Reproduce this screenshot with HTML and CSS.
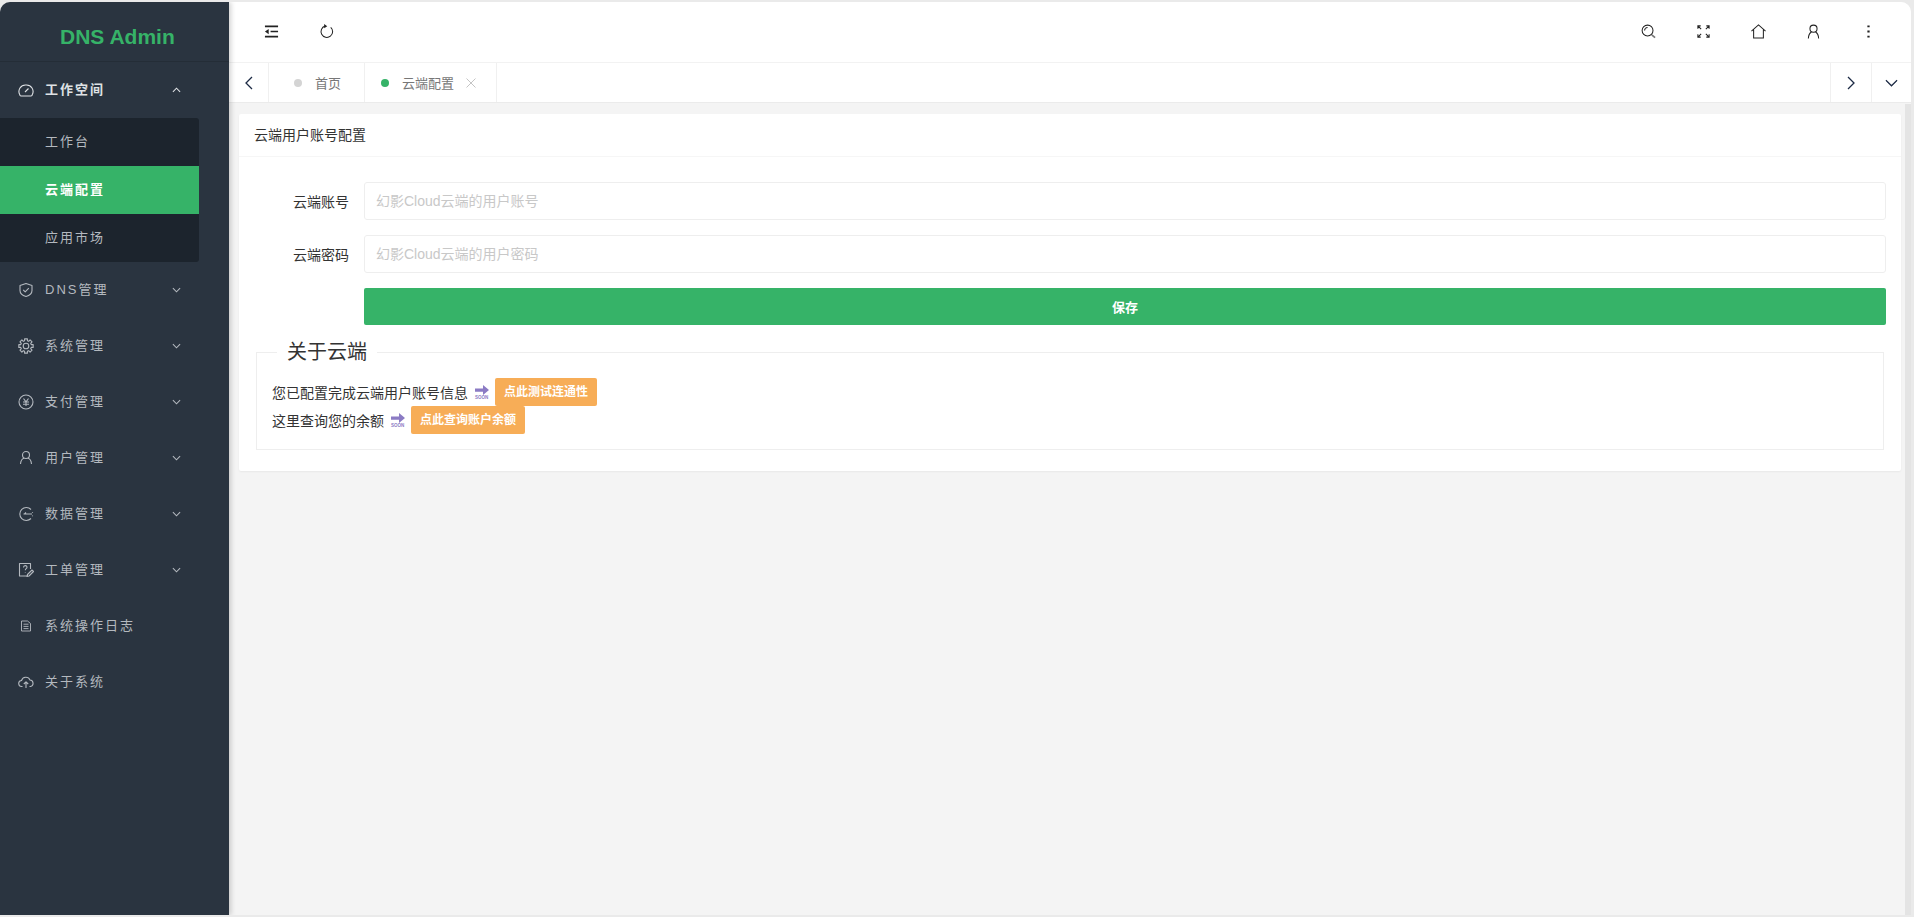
FILE: index.html
```html
<!DOCTYPE html>
<html lang="zh-CN">
<head>
    <meta charset="UTF-8">
    <meta name="viewport" content="width=device-width, initial-scale=1.0">
    <title>DNS Admin</title>
    <link rel="stylesheet" href="styles.css">
</head>
<body>
<div class="app">
    <aside class="sidebar">
        <div class="logo">DNS Admin</div>
        <nav class="menu">
            <div class="menu-item open">
                <svg class="menu-icon" viewBox="0 0 16 16"><path d="M3 14h10a1.200 1.200 0 0 0 1.200-1.200A6.600 6.600 0 0 0 8 3a6.600 6.600 0 0 0-6.200 9.800A1.200 1.200 0 0 0 3 14zM7 10l3.500-3.500"/></svg>
                <span class="menu-text">工作空间</span>
                <svg class="menu-arrow" viewBox="0 0 10 6"><path d="M1 5l4-4 4 4"/></svg>
            </div>
            <div class="submenu">
                <div class="sub-item">工作台</div>
                <div class="sub-item active">云端配置</div>
                <div class="sub-item">应用市场</div>
            </div>
            <div class="menu-item">
                <svg class="menu-icon" viewBox="0 0 16 16"><path d="M8 1.500l6 2v5c0 3-2.500 5-6 6-3.500-1-6-3-6-6v-5zM5.200 7.800l2 2 3.600-3.600"/></svg>
                <span class="menu-text">DNS管理</span>
                <svg class="menu-arrow" viewBox="0 0 10 6"><path d="M1 1l4 4 4-4"/></svg>
            </div>
            <div class="menu-item">
                <svg class="menu-icon" viewBox="0 0 16 16"><path d="M6.600 2.780L6.610 .83H9.390L9.400 2.780L10.700 3.320L12.090 1.950L14.050 3.910L12.680 5.300L13.220 6.600L15.170 6.610V9.390L13.220 9.400L12.680 10.700L14.050 12.090L12.090 14.050L10.700 12.680L9.400 13.220L9.390 15.170H6.610L6.600 13.220L5.300 12.680L3.910 14.050L1.950 12.090L3.320 10.700L2.780 9.400L.83 9.390V6.610L2.780 6.600L3.320 5.300L1.950 3.910L3.910 1.950L5.300 3.320z"/><circle cx="8" cy="8" r="2.800"/></svg>
                <span class="menu-text">系统管理</span>
                <svg class="menu-arrow" viewBox="0 0 10 6"><path d="M1 1l4 4 4-4"/></svg>
            </div>
            <div class="menu-item">
                <svg class="menu-icon" viewBox="0 0 16 16"><circle cx="8" cy="8" r="7"/><path d="M5.500 4.500L8 7.800l2.500-3.300M5 8h6M5 10.300h6M8 8v4"/></svg>
                <span class="menu-text">支付管理</span>
                <svg class="menu-arrow" viewBox="0 0 10 6"><path d="M1 1l4 4 4-4"/></svg>
            </div>
            <div class="menu-item">
                <svg class="menu-icon" viewBox="0 0 16 16"><circle cx="8" cy="5" r="3.500"/><path d="M2.500 14c.3-3.300 2-5.500 3.500-5.800M13.500 14c-.3-3.300-2-5.500-3.500-5.800"/></svg>
                <span class="menu-text">用户管理</span>
                <svg class="menu-arrow" viewBox="0 0 10 6"><path d="M1 1l4 4 4-4"/></svg>
            </div>
            <div class="menu-item">
                <svg class="menu-icon" viewBox="0 0 16 16"><path d="M13 3.500A6.500 6.500 0 1 0 13 12.500M5.500 8H14M6.500 8l1.500-1.500M14.500 6v.8M14.500 9.500v.8"/></svg>
                <span class="menu-text">数据管理</span>
                <svg class="menu-arrow" viewBox="0 0 10 6"><path d="M1 1l4 4 4-4"/></svg>
            </div>
            <div class="menu-item">
                <svg class="menu-icon" viewBox="0 0 16 16"><path d="M9 14H1.500V1.500h11V7M5.500 5.500C5.500 3 9 3 9 5.200c0 1.500-1.700 1.500-1.700 3M7.300 10v.6M9 14.500l.5-2 4.500-4.500 1.500 1.500-4.500 4.500z"/></svg>
                <span class="menu-text">工单管理</span>
                <svg class="menu-arrow" viewBox="0 0 10 6"><path d="M1 1l4 4 4-4"/></svg>
            </div>
            <div class="menu-item">
                <svg class="menu-icon icon-thin" viewBox="0 0 16 16"><path d="M3.500 3h6l3 2.500V13h-9zM5.500 6.200h5M5.500 8.400h5M5.500 10.600h5"/></svg>
                <span class="menu-text">系统操作日志</span>
            </div>
            <div class="menu-item">
                <svg class="menu-icon" viewBox="0 0 16 16"><path d="M4.500 12.500H4a3 3 0 0 1-.5-6A4.500 4.500 0 0 1 12 6a3.300 3.300 0 0 1 .5 6.500h-1M8 14V8M5.800 10L8 7.800 10.200 10"/></svg>
                <span class="menu-text">关于系统</span>
            </div>
        </nav>
    </aside>

    <div class="main">
        <header class="topbar">
            <div class="topbar-group">
                <svg class="top-icon" viewBox="0 0 16 16"><path class="thick" d="M1 2.500h14M7 8h8M1 13.500h14"/><path class="solid" d="M1 8l4-2.800v5.600z"/></svg>
                <svg class="top-icon" viewBox="0 0 16 16"><path d="M6.500 2.200A6.200 6.200 0 1 0 12.500 3.500"/><path class="solid" d="M5.500 0l3.300 2.300-3.300 2.300z"/></svg>
            </div>
            <div class="topbar-group">
                <svg class="top-icon" viewBox="0 0 16 16"><circle cx="7" cy="7" r="5.800"/><path d="M3.800 7A3.200 3.200 0 0 1 7 3.800"/><path class="thick grey" d="M11.500 11.500l3.500 3"/></svg>
                <svg class="top-icon" viewBox="0 0 16 16"><path d="M2 5V2h3M2 2l3.500 3.500M11 2h3v3M14 2l-3.500 3.500M2 11v3h3M2 14l3.500-3.500M11 14h3v-3M14 14l-3.500-3.500"/></svg>
                <svg class="top-icon" viewBox="0 0 16 16"><path d="M.5 7.500L8 1l7.500 6.500M2.800 6v9h10.400V6"/></svg>
                <svg class="top-icon" viewBox="0 0 16 16"><circle cx="8" cy="5" r="3.800"/><path d="M2.500 15.500c.2-3.500 1.500-6 3.300-7M13.500 15.500c-.2-3.500-1.500-6-3.300-7"/></svg>
                <svg class="top-icon" viewBox="0 0 16 16"><path class="thick dots" d="M8 1.500v2M8 7v2M8 12.500v2"/></svg>
            </div>
        </header>

        <div class="tabs">
            <div class="tab-btn">
                <svg class="tab-arrow" viewBox="0 0 8 14"><path d="M7 1L1 7l6 6"/></svg>
            </div>
            <div class="tab">
                <span class="dot"></span>
                <span>首页</span>
            </div>
            <div class="tab tab-current">
                <span class="dot dot-green"></span>
                <span>云端配置</span>
                <svg class="tab-close" viewBox="0 0 10 10"><path d="M.5.500l9 9M9.500.500l-9 9"/></svg>
            </div>
            <div class="tabs-space"></div>
            <div class="tab-btn tab-btn-right tab-btn-wide">
                <svg class="tab-arrow" viewBox="0 0 8 14"><path d="M1 1l6 6-6 6"/></svg>
            </div>
            <div class="tab-btn tab-btn-right">
                <svg class="tab-arrow tab-arrow-down" viewBox="0 0 14 8"><path d="M1 1l6 6 6-6"/></svg>
            </div>
        </div>

        <div class="body-wrap">
            <div class="content">
                <section class="card">
                    <div class="card-header">云端用户账号配置</div>
                    <div class="card-body">
                        <form class="form">
                            <div class="form-row">
                                <label class="form-label" for="account">云端账号</label>
                                <input class="form-input" id="account" type="text" placeholder="幻影Cloud云端的用户账号">
                            </div>
                            <div class="form-row">
                                <label class="form-label" for="password">云端密码</label>
                                <input class="form-input" id="password" type="text" placeholder="幻影Cloud云端的用户密码">
                            </div>
                            <div class="form-row">
                                <span class="form-label"></span>
                                <button class="save-btn" type="button">保存</button>
                            </div>
                        </form>
                        <fieldset class="about">
                            <legend>关于云端</legend>
                            <div class="about-line">
                                <span>您已配置完成云端用户账号信息</span>
                                <svg class="soon" viewBox="0 0 14 14"><path d="M0 3.500h8V0l6 5-6 5V6.700H0z"/><text x="0" y="14">SOON</text></svg>
                                <a class="orange-btn">点此测试连通性</a>
                            </div>
                            <div class="about-line">
                                <span>这里查询您的余额</span>
                                <svg class="soon" viewBox="0 0 14 14"><path d="M0 3.500h8V0l6 5-6 5V6.700H0z"/><text x="0" y="14">SOON</text></svg>
                                <a class="orange-btn">点此查询账户余额</a>
                            </div>
                        </fieldset>
                    </div>
                </section>
            </div>
            <div class="scrollbar"></div>
        </div>
    </div>
</div>
</body>
</html>
```

FILE: styles.css
```css
* {
    box-sizing: border-box;
}

body {
    margin: 0;
    height: 917px;
    padding-top: 2px;
    overflow: hidden;
    background-color: #eaeaea;
    font-family: "Liberation Sans", "Noto Sans CJK SC", sans-serif;
    font-size: 14px;
    color: #333;
}

.app {
    display: flex;
    width: 1911px;
    height: 913px;
    border-radius: 10px 10px 0 0;
    overflow: hidden;
    background-color: #f4f4f4;
}

/* Sidebar */
.sidebar {
    flex: 0 0 229px;
    background-color: #2a3440;
    box-shadow: 2px 0 5px rgba(0, 0, 0, 0.18);
    position: relative;
    z-index: 2;
}

.logo {
    height: 60px;
    padding-left: 60px;
    border-bottom: 1px solid #242d37;
    color: #36b368;
    font-size: 21px;
    font-weight: bold;
    line-height: 70px;
}

.menu-item {
    display: flex;
    align-items: center;
    height: 56px;
    padding-left: 18px;
    color: #b4b9bf;
    font-size: 13px;
    letter-spacing: 2px;
}

.menu-item.open {
    color: #dfe2e5;
    font-weight: bold;
}

.menu-icon {
    width: 16px;
    height: 16px;
    margin-right: 11px;
    fill: none;
    stroke: currentColor;
    stroke-width: 1.100;
    stroke-linejoin: round;
}

.icon-thin {
    stroke-width: 0.900;
}

.menu-text {
    flex: 1;
    padding-bottom: 3px;
}

.menu-arrow {
    width: 9px;
    height: 6px;
    margin-right: 48px;
    fill: none;
    stroke: currentColor;
    stroke-width: 1.200;
}

.submenu {
    width: 199px;
    background-color: #1c242d;
    border-radius: 0 3px 3px 0;
}

.sub-item {
    height: 48px;
    line-height: 48px;
    padding-left: 45px;
    color: #b4b9bf;
    font-size: 13px;
    letter-spacing: 2px;
}

.sub-item.active {
    background-color: #36b368;
    color: #fff;
    font-weight: bold;
}

/* Header and tabs */
.main {
    flex: 1;
    display: flex;
    flex-direction: column;
    min-width: 0;
}

.topbar {
    display: flex;
    justify-content: space-between;
    align-items: center;
    height: 61px;
    flex: none;
    padding: 0 35px 2px 35px;
    background-color: #fff;
    border-bottom: 1px solid #f2f2f2;
}

.topbar-group {
    display: flex;
    align-items: center;
    gap: 40px;
}

.top-icon {
    width: 15px;
    height: 15px;
    fill: none;
    stroke: #222;
    stroke-width: 1.100;
}

.top-icon .thick {
    stroke-width: 1.800;
}

.top-icon .dots {
    stroke-width: 2.400;
}

.top-icon .grey {
    stroke: #777;
}

.top-icon .solid {
    fill: #222;
    stroke: none;
}

.tabs {
    display: flex;
    flex: none;
    height: 40px;
    background-color: #fff;
    border-bottom: 1px solid #ebebeb;
    font-size: 13px;
    color: #777;
}

.tab-btn {
    display: flex;
    justify-content: center;
    align-items: center;
    width: 40px;
    border-right: 1px solid #f0f0f0;
}

.tab-btn-right {
    border-right: none;
    border-left: 1px solid #f0f0f0;
}

.tab-btn-wide {
    width: 41px;
}

.tab-arrow {
    width: 8px;
    height: 14px;
    fill: none;
    stroke: #1c2a44;
    stroke-width: 1.300;
}

.tab-arrow-down {
    width: 13px;
    height: 8px;
}

.tab {
    display: flex;
    align-items: center;
    width: 96px;
    padding-left: 25px;
    border-right: 1px solid #f0f0f0;
}

.tab-current {
    width: 132px;
    padding-left: 16px;
}

.dot {
    width: 8px;
    height: 8px;
    margin-right: 13px;
    border-radius: 50%;
    background-color: #d4d4d4;
}

.dot-green {
    background-color: #36b368;
}

.tab-close {
    width: 10px;
    height: 10px;
    margin-left: 12px;
    fill: none;
    stroke: #c4c4c4;
    stroke-width: 1;
}

.tabs-space {
    flex: 1;
}

/* Page content */
.body-wrap {
    flex: 1;
    display: flex;
    min-height: 0;
}

.content {
    flex: 1;
    padding: 11px 4px 0 10px;
}

.scrollbar {
    flex: 0 0 6px;
    margin-top: 1px;
    background-color: #e4e4e4;
}

.card {
    height: 357px;
    background-color: #fff;
    border-radius: 2px;
    box-shadow: 0 1px 2px rgba(0, 0, 0, 0.05);
}

.card-header {
    height: 43px;
    line-height: 42px;
    padding-left: 15px;
    border-bottom: 1px solid #f6f6f6;
}

.card-body {
    padding: 25px 15px 0 17px;
}

.form-row {
    display: flex;
    align-items: center;
    margin-bottom: 15px;
}

.form-label {
    flex: 0 0 108px;
    padding-right: 15px;
    text-align: right;
    color: #333;
}

.form-input {
    flex: 1;
    height: 38px;
    padding: 0 11px;
    border: 1px solid #eee;
    border-radius: 3px;
    outline: none;
    font: inherit;
}

.form-input::placeholder {
    color: #c8c8c8;
}

.save-btn {
    flex: 1;
    height: 37px;
    border: none;
    border-radius: 2px;
    background-color: #36b368;
    color: #fff;
    font: inherit;
    font-size: 13px;
    font-weight: bold;
}

.about {
    height: 110px;
    margin: 0 2px 0 0;
    padding: 14px 15px 0;
    border: 1px solid #eee;
    min-width: 0;
}

.about legend {
    margin-left: 5px;
    padding: 0 10px;
    font-size: 20px;
    line-height: 24px;
    color: #333;
}

.about-line {
    display: flex;
    align-items: center;
    height: 28px;
}

.soon {
    width: 14px;
    height: 14px;
    margin: 0 6px 0 7px;
    fill: #8b7bc4;
    overflow: visible;
}

.soon text {
    font-size: 4.500px;
    font-weight: bold;
}

.orange-btn {
    height: 28px;
    line-height: 28px;
    padding: 0 9px;
    border-radius: 2px;
    background-color: #f7ad57;
    color: #fff;
    font-size: 12px;
    font-weight: bold;
}
```
